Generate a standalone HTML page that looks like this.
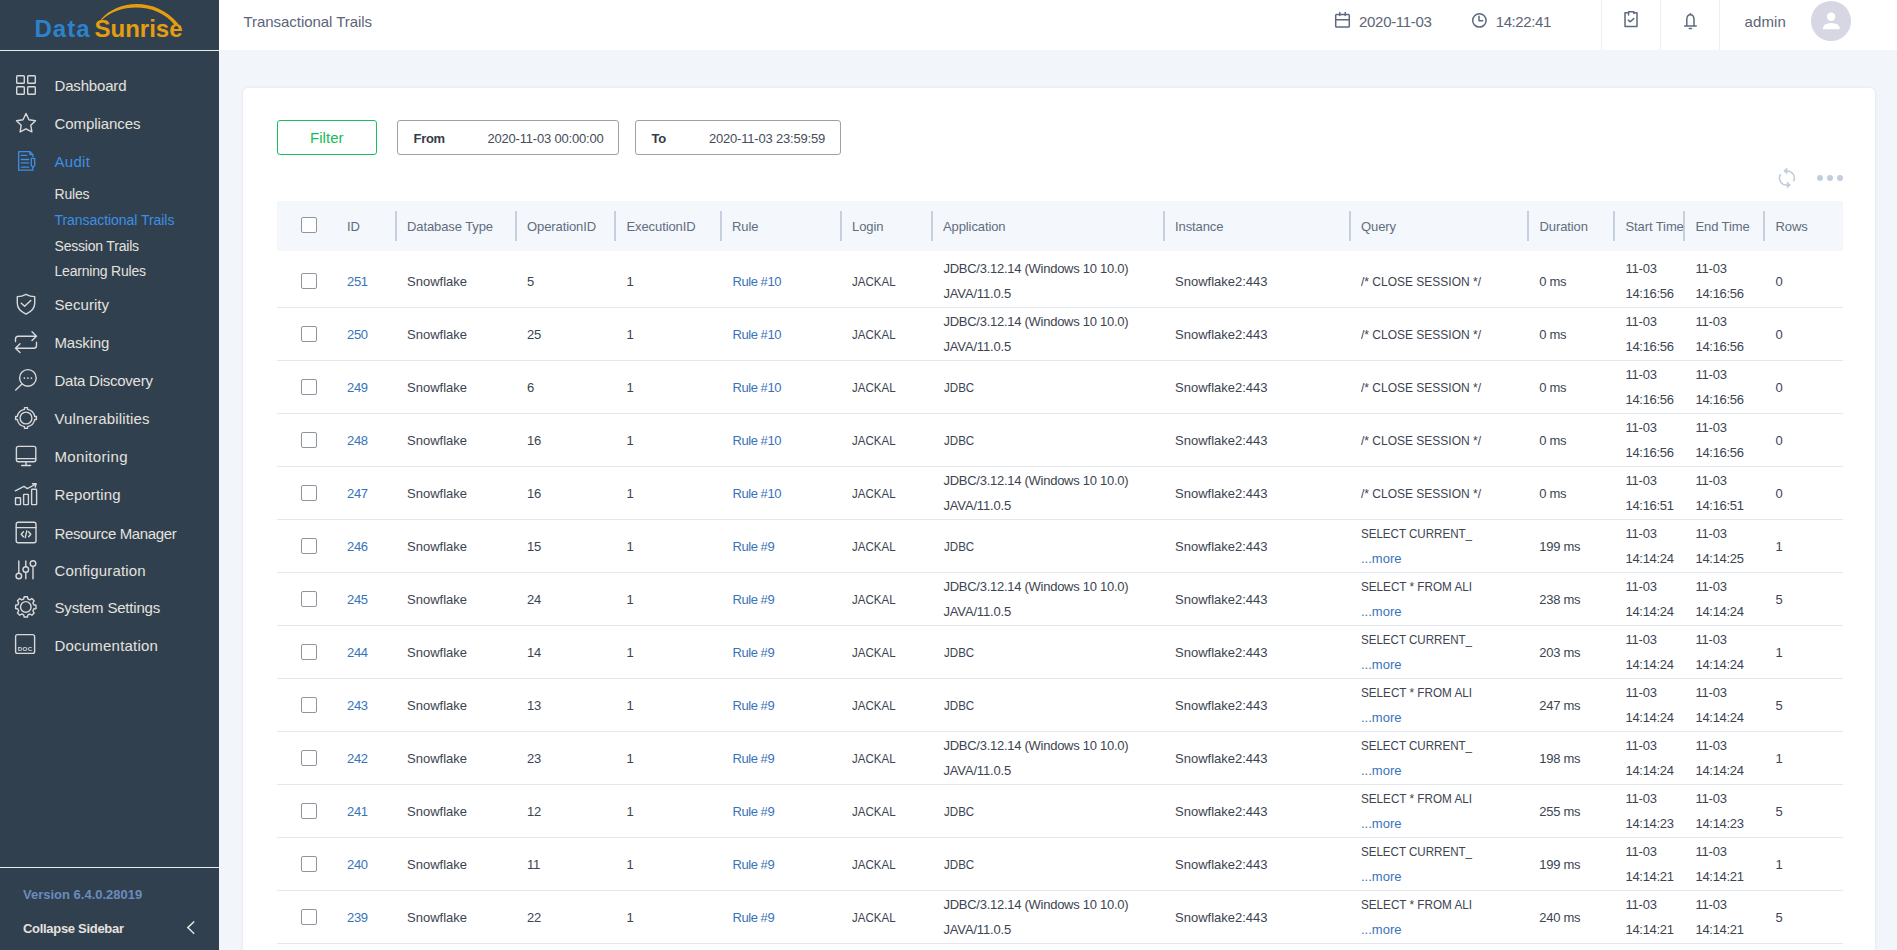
<!DOCTYPE html>
<html><head><meta charset="utf-8">
<style>
*{margin:0;padding:0;box-sizing:border-box}
html,body{width:1897px;height:950px;overflow:hidden;background:#f2f5f9;font-family:'Liberation Sans', sans-serif}
.abs{position:absolute}
.t{position:absolute;height:20px;line-height:20px;white-space:nowrap;font-family:'Liberation Sans', sans-serif}
#sb{position:absolute;left:0;top:0;width:219px;height:950px;background:#30404f}
#hd{position:absolute;left:219px;top:0;width:1678px;height:50px;background:#fff}
.line{position:absolute;left:0;width:219px;height:1px;background:#e9ecef}
#card{position:absolute;left:243px;top:88px;width:1632px;height:900px;background:#fff;border-radius:5px;box-shadow:0 0 3px rgba(40,50,80,0.10)}
.btn{position:absolute;left:277px;top:120px;width:100px;height:35px;border:1.5px solid #16c15d;border-radius:3px}
.inp{position:absolute;top:120px;height:35px;border:1px solid #9ba2ac;border-radius:3px}
#th{position:absolute;left:277px;top:201px;width:1566px;height:50px;background:#f4f7fb}
.sep{position:absolute;top:211px;width:2px;height:30px;background:#c6d0dd}
.rb{position:absolute;left:277px;width:1566px;height:1px;background:#e3e8ee}
.cb{position:absolute;left:301px;width:16px;height:16px;border:1.5px solid #8e959f;border-radius:2px;background:#fff}
</style></head><body>
<div id="sb"></div>
<div class="line" style="top:50px"></div>
<div class="line" style="top:867px"></div>
<div id="hd"></div>
<div id="card"></div>
<div class="btn"></div>
<div class="inp" style="left:397px;width:222px"></div>
<div class="inp" style="left:635px;width:206px"></div>
<div id="th"></div>
<div class="sep" style="left:395px"></div><div class="sep" style="left:515px"></div><div class="sep" style="left:614px"></div><div class="sep" style="left:720px"></div><div class="sep" style="left:840px"></div><div class="sep" style="left:931px"></div><div class="sep" style="left:1163px"></div><div class="sep" style="left:1349px"></div><div class="sep" style="left:1527px"></div><div class="sep" style="left:1613px"></div><div class="sep" style="left:1683px"></div><div class="sep" style="left:1763px"></div>
<div class="cb" style="top:217px"></div>
<div class="rb" style="top:307px"></div><div class="cb" style="top:273px"></div><div class="rb" style="top:360px"></div><div class="cb" style="top:326px"></div><div class="rb" style="top:413px"></div><div class="cb" style="top:379px"></div><div class="rb" style="top:466px"></div><div class="cb" style="top:432px"></div><div class="rb" style="top:519px"></div><div class="cb" style="top:485px"></div><div class="rb" style="top:572px"></div><div class="cb" style="top:538px"></div><div class="rb" style="top:625px"></div><div class="cb" style="top:591px"></div><div class="rb" style="top:678px"></div><div class="cb" style="top:644px"></div><div class="rb" style="top:731px"></div><div class="cb" style="top:697px"></div><div class="rb" style="top:784px"></div><div class="cb" style="top:750px"></div><div class="rb" style="top:837px"></div><div class="cb" style="top:803px"></div><div class="rb" style="top:890px"></div><div class="cb" style="top:856px"></div><div class="rb" style="top:943px"></div><div class="cb" style="top:909px"></div>

<svg class="abs" style="left:0;top:0" width="219" height="50" viewBox="0 0 219 50">
 <path d="M100.8 19.4 C118 -0.5 156 -3 178 23.6 Q177.4 25.6 175 25.4 C156 1.5 119 3.7 101.8 20.1 Q101 20.3 100.8 19.4 Z" fill="#e59d10"/>
</svg>

<div class="t" style="left:34.5px;top:13.3px;height:32px;line-height:32px;font-size:24px;font-weight:bold;color:#2d82cc;letter-spacing:1px">Data</div>
<div class="t" style="left:94.5px;top:13.3px;height:32px;line-height:32px;font-size:24px;font-weight:bold;color:#e59d10;letter-spacing:0px">Sunrise</div>

<svg class="abs" style="left:0;top:0" width="219" height="700" viewBox="0 0 219 700">
 <g fill="none" stroke="#d9d9d9" stroke-width="1.4" stroke-linecap="round" stroke-linejoin="round">
  <!-- dashboard -->
  <rect x="16.7" y="75.7" width="7.6" height="7.6" rx="0.8"/>
  <rect x="27.7" y="75.7" width="7.6" height="7.6" rx="0.8"/>
  <rect x="16.7" y="86.7" width="7.6" height="7.6" rx="0.8"/>
  <rect x="27.7" y="86.7" width="7.6" height="7.6" rx="0.8"/>
  <!-- star -->
  <path d="M26 113.5 L29 119.8 L35.5 120.7 L30.8 125.3 L31.9 131.9 L26 128.8 L20.1 131.9 L21.2 125.3 L16.5 120.7 L23 119.8 Z"/>
  <!-- shield -->
  <path d="M26 294.3 C23 296 20 296.6 17.3 296.6 L17.3 303.5 C17.3 308.5 21 311.8 26 314.2 C31 311.8 34.7 308.5 34.7 303.5 L34.7 296.6 C32 296.6 29 296 26 294.3 Z"/>
  <path d="M21.3 303.3 L24.6 306.2 L30.8 300.5"/>
  <!-- masking -->
  <path d="M15.5 341.5 L15.5 339 Q15.5 336.2 18.3 336.2 L36.5 336.2 M32 331.8 L36.5 336.2 L32 340.6"/>
  <path d="M36.5 342.3 L36.5 345.4 Q36.5 348.2 33.7 348.2 L15.5 348.2 M20 343.8 L15.5 348.2 L20 352.6"/>
  <!-- discovery -->
  <circle cx="27.9" cy="377.9" r="8.3"/>
  <path d="M21.8 384.2 L15.7 390"/>
  <!-- vulnerabilities -->
  <path d="M27.5 409.33 A8.8 8.8 0 0 1 34.67 416.5 L36.4 416.5 L36.4 419.5 L34.67 419.5 A8.8 8.8 0 0 1 27.5 426.67 L27.5 428.4 L24.5 428.4 L24.5 426.67 A8.8 8.8 0 0 1 17.33 419.5 L15.6 419.5 L15.6 416.5 L17.33 416.5 A8.8 8.8 0 0 1 24.5 409.33 L24.5 407.6 L27.5 407.6 Z"/>
  <circle cx="26" cy="418" r="5.9"/>
  <!-- monitor -->
  <rect x="16.4" y="446.4" width="19.4" height="15.3" rx="2"/>
  <path d="M16.4 458.6 L35.8 458.6 M26 461.7 L26 465.3 M21.6 465.5 L30.6 465.5"/>
  <!-- reporting -->
  <rect x="15.5" y="497.8" width="5" height="6.8" rx="0.5"/>
  <rect x="23.6" y="494.4" width="4.8" height="10.2" rx="0.5"/>
  <rect x="31.6" y="489.3" width="5" height="15.3" rx="0.5"/>
  <path d="M15.3 490.8 L24 486.4 L27.3 488.6 L36 484 M32.5 483.8 L36.2 483.8 L35.2 487"/>
  <!-- resource manager -->
  <rect x="16.2" y="522.3" width="19.8" height="20.4" rx="2"/>
  <path d="M16.2 527.6 L36 527.6 M23.4 531.8 L21.2 534.3 L23.4 536.8 M28.6 531.8 L30.8 534.3 L28.6 536.8 M26.8 531 L25.2 537.6"/>
  <!-- configuration -->
  <path d="M18.8 561 L18.8 573 M25.8 561 L25.8 566.5 M25.8 572.5 L25.8 578.7 M33 566.6 L33 578.7"/>
  <circle cx="18.8" cy="576" r="2.8"/>
  <circle cx="25.8" cy="569.5" r="2.8"/>
  <circle cx="33" cy="563.6" r="2.8"/>
  <!-- gear -->
  <circle cx="25.8" cy="606.9" r="5.3"/>
  <!-- doc -->
  <rect x="15.6" y="634.6" width="19" height="18.8" rx="2"/>
 </g>
 <!-- audit (blue) -->
 <g fill="none" stroke="#3f8fe3" stroke-width="1.3" stroke-linejoin="round" stroke-linecap="round">
  <path d="M32.9 156.6 L32.9 154.8 L29.9 151.7 L18.7 151.7 L18.7 170.2 L32.9 170.2 L32.9 168"/>
  <path d="M29.9 151.9 L29.9 154.5 L32.6 154.5"/>
  <path d="M21.3 155.4 L26.9 155.4 M21.3 159.5 L28.7 159.5 M21.3 162.9 L28.7 162.9 M21.3 167.2 L28.7 167.2"/>
  <path d="M31.3 158.4 L34.7 158.4 L34.7 165.6 L33 167.4 L31.3 165.6 Z"/>
 </g>
 <!-- vuln nubs -->
 <g fill="#d9d9d9">
  <circle cx="24.4" cy="378.1" r="0.9"/><circle cx="27.9" cy="378.1" r="0.9"/><circle cx="31.4" cy="378.1" r="0.9"/>
 </g>
 <!-- gear teeth -->
 <path fill="none" stroke="#d9d9d9" stroke-width="1.4" stroke-linejoin="round" d="M23.68 598.98 L24.19 596.73 L27.41 596.73 L27.92 598.98 L29.90 599.80 L31.85 598.57 L34.13 600.85 L32.90 602.80 L33.72 604.78 L35.97 605.29 L35.97 608.51 L33.72 609.02 L32.90 611.00 L34.13 612.95 L31.85 615.23 L29.90 614.00 L27.92 614.82 L27.41 617.07 L24.19 617.07 L23.68 614.82 L21.70 614.00 L19.75 615.23 L17.47 612.95 L18.70 611.00 L17.88 609.02 L15.63 608.51 L15.63 605.29 L17.88 604.78 L18.70 602.80 L17.47 600.85 L19.75 598.57 L21.70 599.80 Z"/>
 <text x="25.1" y="651.4" font-family="Liberation Sans" font-weight="bold" font-size="6.2" fill="#d9d9d9" text-anchor="middle" letter-spacing="0.3">DOC</text>
</svg>


<svg class="abs" style="left:1300px;top:0" width="597" height="50" viewBox="1300 0 597 50">
 <g fill="none" stroke="#5d6a7e" stroke-width="1.5" stroke-linejoin="round" stroke-linecap="round">
  <rect x="1335.7" y="14.4" width="13.6" height="12.7" rx="0.8"/>
  <path d="M1335.7 19.8 L1349.3 19.8 M1339.8 12.6 L1339.8 15.5 M1345.2 12.6 L1345.2 15.5"/>
  <circle cx="1479.4" cy="20.4" r="6.7"/>
  <path d="M1479 16.2 L1479 20.8 L1482.7 20.8"/>
  <path d="M1627.5 12.8 L1625 12.8 L1625 26.6 L1637 26.6 L1637 12.8 L1634 12.8"/>
  <path d="M1628.6 15 L1628.6 11.8 L1633.8 11.8 L1633.8 13.5"/>
  <path d="M1628.3 20.2 L1630.3 21.8 L1633.7 18.6"/>
  <path d="M1686.8 25.6 L1686.8 19.6 Q1686.8 14.7 1690.4 14.7 Q1694 14.7 1694 19.6 L1694 25.6 M1684.6 26 L1696.2 26"/>
  <path d="M1689.3 28.4 L1691.5 28.4"/>
 </g>
 <circle cx="1690.4" cy="13.9" r="0.9" fill="#5d6a7e"/>
 <g stroke="#ebeef2" stroke-width="1">
  <path d="M1601.5 0 L1601.5 50 M1660.5 0 L1660.5 50 M1719.5 0 L1719.5 50"/>
 </g>
 <circle cx="1831" cy="21" r="20" fill="#d6d7e2"/>
 <circle cx="1831.1" cy="16.8" r="4.2" fill="#fff"/>
 <path d="M1822.8 29.2 Q1822.8 23 1831.3 23 Q1839.9 23 1839.9 29.2 Z" fill="#fff"/>
</svg>


<svg class="abs" style="left:1770px;top:160px" width="80" height="40" viewBox="1770 160 80 40">
 <g fill="none" stroke="#c3cedc" stroke-width="1.6">
  <path d="M1786.5 171 A7 7 0 0 1 1793.4 181.4"/>
  <path d="M1780.6 174.3 A7 7 0 0 0 1787.5 185"/>
 </g>
 <g fill="#c3cedc">
  <path d="M1783.3 170.9 L1787.3 167.2 L1787.3 174.6 Z"/>
  <path d="M1790.9 185 L1786.9 181.3 L1786.9 188.7 Z"/>
  <circle cx="1820" cy="178" r="3"/><circle cx="1830" cy="178" r="3"/><circle cx="1840" cy="178" r="3"/>
 </g>
</svg>

<svg class="abs" style="left:180px;top:915px" width="20" height="25" viewBox="180 915 20 25"><path d="M194.2 921.5 L187.8 927.6 L194.2 933.7" fill="none" stroke="#e4e2de" stroke-width="1.5"/></svg>
<div class="t" style="left:54.5px;top:75.80px;font-size:15px;color:#e4e2de;font-weight:normal;letter-spacing:-0.175px;">Dashboard</div><div class="t" style="left:54.5px;top:113.80px;font-size:15px;color:#e4e2de;font-weight:normal;letter-spacing:-0.07px;">Compliances</div><div class="t" style="left:54.5px;top:151.80px;font-size:15px;color:#3f8fe3;font-weight:normal;letter-spacing:0.3px;">Audit</div><div class="t" style="left:54.5px;top:294.60px;font-size:15px;color:#e4e2de;font-weight:normal;letter-spacing:0.057px;">Security</div><div class="t" style="left:54.5px;top:332.90px;font-size:15px;color:#e4e2de;font-weight:normal;letter-spacing:-0.167px;">Masking</div><div class="t" style="left:54.5px;top:370.80px;font-size:15px;color:#e4e2de;font-weight:normal;letter-spacing:-0.254px;">Data Discovery</div><div class="t" style="left:54.5px;top:408.70px;font-size:15px;color:#e4e2de;font-weight:normal;letter-spacing:0.157px;">Vulnerabilities</div><div class="t" style="left:54.5px;top:446.60px;font-size:15px;color:#e4e2de;font-weight:normal;letter-spacing:0.333px;">Monitoring</div><div class="t" style="left:54.5px;top:484.50px;font-size:15px;color:#e4e2de;font-weight:normal;letter-spacing:0.125px;">Reporting</div><div class="t" style="left:54.5px;top:523.50px;font-size:15px;color:#e4e2de;font-weight:normal;letter-spacing:-0.353px;">Resource Manager</div><div class="t" style="left:54.5px;top:560.80px;font-size:15px;color:#e4e2de;font-weight:normal;letter-spacing:0.15px;">Configuration</div><div class="t" style="left:54.5px;top:597.60px;font-size:15px;color:#e4e2de;font-weight:normal;letter-spacing:-0.186px;">System Settings</div><div class="t" style="left:54.5px;top:635.70px;font-size:15px;color:#e4e2de;font-weight:normal;letter-spacing:0.208px;">Documentation</div><div class="t" style="left:54.5px;top:183.95px;font-size:14px;color:#e4e2de;font-weight:normal;letter-spacing:-0.2px;">Rules</div><div class="t" style="left:54.5px;top:209.75px;font-size:14px;color:#3f8fe3;font-weight:normal;letter-spacing:-0.05px;">Transactional Trails</div><div class="t" style="left:54.5px;top:235.55px;font-size:14px;color:#e4e2de;font-weight:normal;letter-spacing:-0.2px;">Session Trails</div><div class="t" style="left:54.5px;top:261.35px;font-size:14px;color:#e4e2de;font-weight:normal;letter-spacing:-0.2px;">Learning Rules</div><div class="t" style="left:23px;top:885.10px;font-size:13px;color:#6a8cbd;font-weight:bold;letter-spacing:0px;">Version 6.4.0.28019</div><div class="t" style="left:23px;top:919.10px;font-size:13px;color:#e4e2de;font-weight:bold;letter-spacing:-0.3px;">Collapse Sidebar</div><div class="t" style="left:243.5px;top:11.50px;font-size:15px;color:#5b6577;font-weight:normal;letter-spacing:-0.05px;">Transactional Trails</div><div class="t" style="left:1359px;top:11.80px;font-size:15px;color:#5b6577;font-weight:normal;letter-spacing:-0.3px;">2020-11-03</div><div class="t" style="left:1495.7px;top:11.80px;font-size:15px;color:#5b6577;font-weight:normal;letter-spacing:-0.4px;">14:22:41</div><div class="t" style="left:1744.5px;top:11.70px;font-size:15px;color:#5b6577;font-weight:normal;letter-spacing:0.1px;">admin</div><div class="t" style="left:310px;top:128.00px;font-size:15px;color:#16bb5a;font-weight:normal;letter-spacing:0.05px;">Filter</div><div class="t" style="left:413.5px;top:128.70px;font-size:13px;color:#363c47;font-weight:bold;letter-spacing:-0.3px;">From</div><div class="t" style="left:487.5px;top:128.70px;font-size:13px;color:#454c58;font-weight:normal;letter-spacing:-0.2px;">2020-11-03 00:00:00</div><div class="t" style="left:651.5px;top:128.70px;font-size:13px;color:#363c47;font-weight:bold;letter-spacing:-0.3px;">To</div><div class="t" style="left:709px;top:128.70px;font-size:13px;color:#454c58;font-weight:normal;letter-spacing:-0.2px;">2020-11-03 23:59:59</div><div class="t" style="left:347px;top:216.50px;font-size:13px;color:#616d80;font-weight:normal;letter-spacing:-0.1px;">ID</div><div class="t" style="left:407px;top:216.50px;font-size:13px;color:#616d80;font-weight:normal;letter-spacing:-0.1px;">Database Type</div><div class="t" style="left:527px;top:216.50px;font-size:13px;color:#616d80;font-weight:normal;letter-spacing:-0.1px;">OperationID</div><div class="t" style="left:626.5px;top:216.50px;font-size:13px;color:#616d80;font-weight:normal;letter-spacing:-0.1px;">ExecutionID</div><div class="t" style="left:732px;top:216.50px;font-size:13px;color:#616d80;font-weight:normal;letter-spacing:-0.1px;">Rule</div><div class="t" style="left:852px;top:216.50px;font-size:13px;color:#616d80;font-weight:normal;letter-spacing:-0.1px;">Login</div><div class="t" style="left:943px;top:216.50px;font-size:13px;color:#616d80;font-weight:normal;letter-spacing:-0.1px;">Application</div><div class="t" style="left:1175px;top:216.50px;font-size:13px;color:#616d80;font-weight:normal;letter-spacing:-0.1px;">Instance</div><div class="t" style="left:1361px;top:216.50px;font-size:13px;color:#616d80;font-weight:normal;letter-spacing:-0.1px;">Query</div><div class="t" style="left:1539.5px;top:216.50px;font-size:13px;color:#616d80;font-weight:normal;letter-spacing:-0.1px;">Duration</div><div class="t" style="left:1625.5px;top:216.50px;font-size:13px;color:#616d80;font-weight:normal;letter-spacing:-0.1px;width:58px;overflow:hidden;">Start Time</div><div class="t" style="left:1695.5px;top:216.50px;font-size:13px;color:#616d80;font-weight:normal;letter-spacing:-0.1px;">End Time</div><div class="t" style="left:1775.5px;top:216.50px;font-size:13px;color:#616d80;font-weight:normal;letter-spacing:-0.1px;">Rows</div><div class="t" style="left:347px;top:271.50px;font-size:13px;color:#3873b9;font-weight:normal;letter-spacing:-0.3px;">251</div><div class="t" style="left:407px;top:271.50px;font-size:13px;color:#3c4451;font-weight:normal;letter-spacing:0px;">Snowflake</div><div class="t" style="left:527px;top:271.50px;font-size:13px;color:#3c4451;font-weight:normal;letter-spacing:-0.3px;">5</div><div class="t" style="left:626.5px;top:271.50px;font-size:13px;color:#3c4451;font-weight:normal;letter-spacing:0px;">1</div><div class="t" style="left:732.5px;top:271.50px;font-size:13px;color:#3873b9;font-weight:normal;letter-spacing:-0.45px;">Rule #10</div><div class="t" style="left:852.3px;top:271.50px;font-size:13px;color:#3c4451;font-weight:normal;letter-spacing:0px;transform:scaleX(0.888);transform-origin:0 0;">JACKAL</div><div class="t" style="left:943.5px;top:258.50px;font-size:13px;color:#3c4451;font-weight:normal;letter-spacing:-0.27px;">JDBC/3.12.14 (Windows 10 10.0)</div><div class="t" style="left:943.5px;top:284.00px;font-size:13px;color:#3c4451;font-weight:normal;letter-spacing:-0.17px;">JAVA/11.0.5</div><div class="t" style="left:1175px;top:271.50px;font-size:13px;color:#3c4451;font-weight:normal;letter-spacing:0px;">Snowflake2:443</div><div class="t" style="left:1361px;top:271.50px;font-size:13px;color:#3c4451;font-weight:normal;letter-spacing:0px;transform:scaleX(0.923);transform-origin:0 0;">/* CLOSE SESSION */</div><div class="t" style="left:1539.3px;top:271.50px;font-size:13px;color:#3c4451;font-weight:normal;letter-spacing:-0.3px;">0 ms</div><div class="t" style="left:1625.5px;top:258.50px;font-size:13px;color:#3c4451;font-weight:normal;letter-spacing:-0.2px;">11-03</div><div class="t" style="left:1625.5px;top:284.00px;font-size:13px;color:#3c4451;font-weight:normal;letter-spacing:-0.3px;">14:16:56</div><div class="t" style="left:1695.5px;top:258.50px;font-size:13px;color:#3c4451;font-weight:normal;letter-spacing:-0.2px;">11-03</div><div class="t" style="left:1695.5px;top:284.00px;font-size:13px;color:#3c4451;font-weight:normal;letter-spacing:-0.3px;">14:16:56</div><div class="t" style="left:1775.5px;top:271.50px;font-size:13px;color:#3c4451;font-weight:normal;letter-spacing:0px;">0</div><div class="t" style="left:347px;top:324.50px;font-size:13px;color:#3873b9;font-weight:normal;letter-spacing:-0.3px;">250</div><div class="t" style="left:407px;top:324.50px;font-size:13px;color:#3c4451;font-weight:normal;letter-spacing:0px;">Snowflake</div><div class="t" style="left:527px;top:324.50px;font-size:13px;color:#3c4451;font-weight:normal;letter-spacing:-0.3px;">25</div><div class="t" style="left:626.5px;top:324.50px;font-size:13px;color:#3c4451;font-weight:normal;letter-spacing:0px;">1</div><div class="t" style="left:732.5px;top:324.50px;font-size:13px;color:#3873b9;font-weight:normal;letter-spacing:-0.45px;">Rule #10</div><div class="t" style="left:852.3px;top:324.50px;font-size:13px;color:#3c4451;font-weight:normal;letter-spacing:0px;transform:scaleX(0.888);transform-origin:0 0;">JACKAL</div><div class="t" style="left:943.5px;top:311.50px;font-size:13px;color:#3c4451;font-weight:normal;letter-spacing:-0.27px;">JDBC/3.12.14 (Windows 10 10.0)</div><div class="t" style="left:943.5px;top:337.00px;font-size:13px;color:#3c4451;font-weight:normal;letter-spacing:-0.17px;">JAVA/11.0.5</div><div class="t" style="left:1175px;top:324.50px;font-size:13px;color:#3c4451;font-weight:normal;letter-spacing:0px;">Snowflake2:443</div><div class="t" style="left:1361px;top:324.50px;font-size:13px;color:#3c4451;font-weight:normal;letter-spacing:0px;transform:scaleX(0.923);transform-origin:0 0;">/* CLOSE SESSION */</div><div class="t" style="left:1539.3px;top:324.50px;font-size:13px;color:#3c4451;font-weight:normal;letter-spacing:-0.3px;">0 ms</div><div class="t" style="left:1625.5px;top:311.50px;font-size:13px;color:#3c4451;font-weight:normal;letter-spacing:-0.2px;">11-03</div><div class="t" style="left:1625.5px;top:337.00px;font-size:13px;color:#3c4451;font-weight:normal;letter-spacing:-0.3px;">14:16:56</div><div class="t" style="left:1695.5px;top:311.50px;font-size:13px;color:#3c4451;font-weight:normal;letter-spacing:-0.2px;">11-03</div><div class="t" style="left:1695.5px;top:337.00px;font-size:13px;color:#3c4451;font-weight:normal;letter-spacing:-0.3px;">14:16:56</div><div class="t" style="left:1775.5px;top:324.50px;font-size:13px;color:#3c4451;font-weight:normal;letter-spacing:0px;">0</div><div class="t" style="left:347px;top:377.50px;font-size:13px;color:#3873b9;font-weight:normal;letter-spacing:-0.3px;">249</div><div class="t" style="left:407px;top:377.50px;font-size:13px;color:#3c4451;font-weight:normal;letter-spacing:0px;">Snowflake</div><div class="t" style="left:527px;top:377.50px;font-size:13px;color:#3c4451;font-weight:normal;letter-spacing:-0.3px;">6</div><div class="t" style="left:626.5px;top:377.50px;font-size:13px;color:#3c4451;font-weight:normal;letter-spacing:0px;">1</div><div class="t" style="left:732.5px;top:377.50px;font-size:13px;color:#3873b9;font-weight:normal;letter-spacing:-0.45px;">Rule #10</div><div class="t" style="left:852.3px;top:377.50px;font-size:13px;color:#3c4451;font-weight:normal;letter-spacing:0px;transform:scaleX(0.888);transform-origin:0 0;">JACKAL</div><div class="t" style="left:943.5px;top:377.50px;font-size:13px;color:#3c4451;font-weight:normal;letter-spacing:0px;transform:scaleX(0.89);transform-origin:0 0;">JDBC</div><div class="t" style="left:1175px;top:377.50px;font-size:13px;color:#3c4451;font-weight:normal;letter-spacing:0px;">Snowflake2:443</div><div class="t" style="left:1361px;top:377.50px;font-size:13px;color:#3c4451;font-weight:normal;letter-spacing:0px;transform:scaleX(0.923);transform-origin:0 0;">/* CLOSE SESSION */</div><div class="t" style="left:1539.3px;top:377.50px;font-size:13px;color:#3c4451;font-weight:normal;letter-spacing:-0.3px;">0 ms</div><div class="t" style="left:1625.5px;top:364.50px;font-size:13px;color:#3c4451;font-weight:normal;letter-spacing:-0.2px;">11-03</div><div class="t" style="left:1625.5px;top:390.00px;font-size:13px;color:#3c4451;font-weight:normal;letter-spacing:-0.3px;">14:16:56</div><div class="t" style="left:1695.5px;top:364.50px;font-size:13px;color:#3c4451;font-weight:normal;letter-spacing:-0.2px;">11-03</div><div class="t" style="left:1695.5px;top:390.00px;font-size:13px;color:#3c4451;font-weight:normal;letter-spacing:-0.3px;">14:16:56</div><div class="t" style="left:1775.5px;top:377.50px;font-size:13px;color:#3c4451;font-weight:normal;letter-spacing:0px;">0</div><div class="t" style="left:347px;top:430.50px;font-size:13px;color:#3873b9;font-weight:normal;letter-spacing:-0.3px;">248</div><div class="t" style="left:407px;top:430.50px;font-size:13px;color:#3c4451;font-weight:normal;letter-spacing:0px;">Snowflake</div><div class="t" style="left:527px;top:430.50px;font-size:13px;color:#3c4451;font-weight:normal;letter-spacing:-0.3px;">16</div><div class="t" style="left:626.5px;top:430.50px;font-size:13px;color:#3c4451;font-weight:normal;letter-spacing:0px;">1</div><div class="t" style="left:732.5px;top:430.50px;font-size:13px;color:#3873b9;font-weight:normal;letter-spacing:-0.45px;">Rule #10</div><div class="t" style="left:852.3px;top:430.50px;font-size:13px;color:#3c4451;font-weight:normal;letter-spacing:0px;transform:scaleX(0.888);transform-origin:0 0;">JACKAL</div><div class="t" style="left:943.5px;top:430.50px;font-size:13px;color:#3c4451;font-weight:normal;letter-spacing:0px;transform:scaleX(0.89);transform-origin:0 0;">JDBC</div><div class="t" style="left:1175px;top:430.50px;font-size:13px;color:#3c4451;font-weight:normal;letter-spacing:0px;">Snowflake2:443</div><div class="t" style="left:1361px;top:430.50px;font-size:13px;color:#3c4451;font-weight:normal;letter-spacing:0px;transform:scaleX(0.923);transform-origin:0 0;">/* CLOSE SESSION */</div><div class="t" style="left:1539.3px;top:430.50px;font-size:13px;color:#3c4451;font-weight:normal;letter-spacing:-0.3px;">0 ms</div><div class="t" style="left:1625.5px;top:417.50px;font-size:13px;color:#3c4451;font-weight:normal;letter-spacing:-0.2px;">11-03</div><div class="t" style="left:1625.5px;top:443.00px;font-size:13px;color:#3c4451;font-weight:normal;letter-spacing:-0.3px;">14:16:56</div><div class="t" style="left:1695.5px;top:417.50px;font-size:13px;color:#3c4451;font-weight:normal;letter-spacing:-0.2px;">11-03</div><div class="t" style="left:1695.5px;top:443.00px;font-size:13px;color:#3c4451;font-weight:normal;letter-spacing:-0.3px;">14:16:56</div><div class="t" style="left:1775.5px;top:430.50px;font-size:13px;color:#3c4451;font-weight:normal;letter-spacing:0px;">0</div><div class="t" style="left:347px;top:483.50px;font-size:13px;color:#3873b9;font-weight:normal;letter-spacing:-0.3px;">247</div><div class="t" style="left:407px;top:483.50px;font-size:13px;color:#3c4451;font-weight:normal;letter-spacing:0px;">Snowflake</div><div class="t" style="left:527px;top:483.50px;font-size:13px;color:#3c4451;font-weight:normal;letter-spacing:-0.3px;">16</div><div class="t" style="left:626.5px;top:483.50px;font-size:13px;color:#3c4451;font-weight:normal;letter-spacing:0px;">1</div><div class="t" style="left:732.5px;top:483.50px;font-size:13px;color:#3873b9;font-weight:normal;letter-spacing:-0.45px;">Rule #10</div><div class="t" style="left:852.3px;top:483.50px;font-size:13px;color:#3c4451;font-weight:normal;letter-spacing:0px;transform:scaleX(0.888);transform-origin:0 0;">JACKAL</div><div class="t" style="left:943.5px;top:470.50px;font-size:13px;color:#3c4451;font-weight:normal;letter-spacing:-0.27px;">JDBC/3.12.14 (Windows 10 10.0)</div><div class="t" style="left:943.5px;top:496.00px;font-size:13px;color:#3c4451;font-weight:normal;letter-spacing:-0.17px;">JAVA/11.0.5</div><div class="t" style="left:1175px;top:483.50px;font-size:13px;color:#3c4451;font-weight:normal;letter-spacing:0px;">Snowflake2:443</div><div class="t" style="left:1361px;top:483.50px;font-size:13px;color:#3c4451;font-weight:normal;letter-spacing:0px;transform:scaleX(0.923);transform-origin:0 0;">/* CLOSE SESSION */</div><div class="t" style="left:1539.3px;top:483.50px;font-size:13px;color:#3c4451;font-weight:normal;letter-spacing:-0.3px;">0 ms</div><div class="t" style="left:1625.5px;top:470.50px;font-size:13px;color:#3c4451;font-weight:normal;letter-spacing:-0.2px;">11-03</div><div class="t" style="left:1625.5px;top:496.00px;font-size:13px;color:#3c4451;font-weight:normal;letter-spacing:-0.3px;">14:16:51</div><div class="t" style="left:1695.5px;top:470.50px;font-size:13px;color:#3c4451;font-weight:normal;letter-spacing:-0.2px;">11-03</div><div class="t" style="left:1695.5px;top:496.00px;font-size:13px;color:#3c4451;font-weight:normal;letter-spacing:-0.3px;">14:16:51</div><div class="t" style="left:1775.5px;top:483.50px;font-size:13px;color:#3c4451;font-weight:normal;letter-spacing:0px;">0</div><div class="t" style="left:347px;top:536.50px;font-size:13px;color:#3873b9;font-weight:normal;letter-spacing:-0.3px;">246</div><div class="t" style="left:407px;top:536.50px;font-size:13px;color:#3c4451;font-weight:normal;letter-spacing:0px;">Snowflake</div><div class="t" style="left:527px;top:536.50px;font-size:13px;color:#3c4451;font-weight:normal;letter-spacing:-0.3px;">15</div><div class="t" style="left:626.5px;top:536.50px;font-size:13px;color:#3c4451;font-weight:normal;letter-spacing:0px;">1</div><div class="t" style="left:732.5px;top:536.50px;font-size:13px;color:#3873b9;font-weight:normal;letter-spacing:-0.45px;">Rule #9</div><div class="t" style="left:852.3px;top:536.50px;font-size:13px;color:#3c4451;font-weight:normal;letter-spacing:0px;transform:scaleX(0.888);transform-origin:0 0;">JACKAL</div><div class="t" style="left:943.5px;top:536.50px;font-size:13px;color:#3c4451;font-weight:normal;letter-spacing:0px;transform:scaleX(0.89);transform-origin:0 0;">JDBC</div><div class="t" style="left:1175px;top:536.50px;font-size:13px;color:#3c4451;font-weight:normal;letter-spacing:0px;">Snowflake2:443</div><div class="t" style="left:1361px;top:523.50px;font-size:13px;color:#3c4451;font-weight:normal;letter-spacing:0px;transform:scaleX(0.89);transform-origin:0 0;">SELECT CURRENT_</div><div class="t" style="left:1361px;top:549.00px;font-size:13px;color:#3873b9;font-weight:normal;letter-spacing:0px;">...more</div><div class="t" style="left:1539.3px;top:536.50px;font-size:13px;color:#3c4451;font-weight:normal;letter-spacing:-0.3px;">199 ms</div><div class="t" style="left:1625.5px;top:523.50px;font-size:13px;color:#3c4451;font-weight:normal;letter-spacing:-0.2px;">11-03</div><div class="t" style="left:1625.5px;top:549.00px;font-size:13px;color:#3c4451;font-weight:normal;letter-spacing:-0.3px;">14:14:24</div><div class="t" style="left:1695.5px;top:523.50px;font-size:13px;color:#3c4451;font-weight:normal;letter-spacing:-0.2px;">11-03</div><div class="t" style="left:1695.5px;top:549.00px;font-size:13px;color:#3c4451;font-weight:normal;letter-spacing:-0.3px;">14:14:25</div><div class="t" style="left:1775.5px;top:536.50px;font-size:13px;color:#3c4451;font-weight:normal;letter-spacing:0px;">1</div><div class="t" style="left:347px;top:589.50px;font-size:13px;color:#3873b9;font-weight:normal;letter-spacing:-0.3px;">245</div><div class="t" style="left:407px;top:589.50px;font-size:13px;color:#3c4451;font-weight:normal;letter-spacing:0px;">Snowflake</div><div class="t" style="left:527px;top:589.50px;font-size:13px;color:#3c4451;font-weight:normal;letter-spacing:-0.3px;">24</div><div class="t" style="left:626.5px;top:589.50px;font-size:13px;color:#3c4451;font-weight:normal;letter-spacing:0px;">1</div><div class="t" style="left:732.5px;top:589.50px;font-size:13px;color:#3873b9;font-weight:normal;letter-spacing:-0.45px;">Rule #9</div><div class="t" style="left:852.3px;top:589.50px;font-size:13px;color:#3c4451;font-weight:normal;letter-spacing:0px;transform:scaleX(0.888);transform-origin:0 0;">JACKAL</div><div class="t" style="left:943.5px;top:576.50px;font-size:13px;color:#3c4451;font-weight:normal;letter-spacing:-0.27px;">JDBC/3.12.14 (Windows 10 10.0)</div><div class="t" style="left:943.5px;top:602.00px;font-size:13px;color:#3c4451;font-weight:normal;letter-spacing:-0.17px;">JAVA/11.0.5</div><div class="t" style="left:1175px;top:589.50px;font-size:13px;color:#3c4451;font-weight:normal;letter-spacing:0px;">Snowflake2:443</div><div class="t" style="left:1361px;top:576.50px;font-size:13px;color:#3c4451;font-weight:normal;letter-spacing:0px;transform:scaleX(0.9);transform-origin:0 0;">SELECT * FROM ALI</div><div class="t" style="left:1361px;top:602.00px;font-size:13px;color:#3873b9;font-weight:normal;letter-spacing:0px;">...more</div><div class="t" style="left:1539.3px;top:589.50px;font-size:13px;color:#3c4451;font-weight:normal;letter-spacing:-0.3px;">238 ms</div><div class="t" style="left:1625.5px;top:576.50px;font-size:13px;color:#3c4451;font-weight:normal;letter-spacing:-0.2px;">11-03</div><div class="t" style="left:1625.5px;top:602.00px;font-size:13px;color:#3c4451;font-weight:normal;letter-spacing:-0.3px;">14:14:24</div><div class="t" style="left:1695.5px;top:576.50px;font-size:13px;color:#3c4451;font-weight:normal;letter-spacing:-0.2px;">11-03</div><div class="t" style="left:1695.5px;top:602.00px;font-size:13px;color:#3c4451;font-weight:normal;letter-spacing:-0.3px;">14:14:24</div><div class="t" style="left:1775.5px;top:589.50px;font-size:13px;color:#3c4451;font-weight:normal;letter-spacing:0px;">5</div><div class="t" style="left:347px;top:642.50px;font-size:13px;color:#3873b9;font-weight:normal;letter-spacing:-0.3px;">244</div><div class="t" style="left:407px;top:642.50px;font-size:13px;color:#3c4451;font-weight:normal;letter-spacing:0px;">Snowflake</div><div class="t" style="left:527px;top:642.50px;font-size:13px;color:#3c4451;font-weight:normal;letter-spacing:-0.3px;">14</div><div class="t" style="left:626.5px;top:642.50px;font-size:13px;color:#3c4451;font-weight:normal;letter-spacing:0px;">1</div><div class="t" style="left:732.5px;top:642.50px;font-size:13px;color:#3873b9;font-weight:normal;letter-spacing:-0.45px;">Rule #9</div><div class="t" style="left:852.3px;top:642.50px;font-size:13px;color:#3c4451;font-weight:normal;letter-spacing:0px;transform:scaleX(0.888);transform-origin:0 0;">JACKAL</div><div class="t" style="left:943.5px;top:642.50px;font-size:13px;color:#3c4451;font-weight:normal;letter-spacing:0px;transform:scaleX(0.89);transform-origin:0 0;">JDBC</div><div class="t" style="left:1175px;top:642.50px;font-size:13px;color:#3c4451;font-weight:normal;letter-spacing:0px;">Snowflake2:443</div><div class="t" style="left:1361px;top:629.50px;font-size:13px;color:#3c4451;font-weight:normal;letter-spacing:0px;transform:scaleX(0.89);transform-origin:0 0;">SELECT CURRENT_</div><div class="t" style="left:1361px;top:655.00px;font-size:13px;color:#3873b9;font-weight:normal;letter-spacing:0px;">...more</div><div class="t" style="left:1539.3px;top:642.50px;font-size:13px;color:#3c4451;font-weight:normal;letter-spacing:-0.3px;">203 ms</div><div class="t" style="left:1625.5px;top:629.50px;font-size:13px;color:#3c4451;font-weight:normal;letter-spacing:-0.2px;">11-03</div><div class="t" style="left:1625.5px;top:655.00px;font-size:13px;color:#3c4451;font-weight:normal;letter-spacing:-0.3px;">14:14:24</div><div class="t" style="left:1695.5px;top:629.50px;font-size:13px;color:#3c4451;font-weight:normal;letter-spacing:-0.2px;">11-03</div><div class="t" style="left:1695.5px;top:655.00px;font-size:13px;color:#3c4451;font-weight:normal;letter-spacing:-0.3px;">14:14:24</div><div class="t" style="left:1775.5px;top:642.50px;font-size:13px;color:#3c4451;font-weight:normal;letter-spacing:0px;">1</div><div class="t" style="left:347px;top:695.50px;font-size:13px;color:#3873b9;font-weight:normal;letter-spacing:-0.3px;">243</div><div class="t" style="left:407px;top:695.50px;font-size:13px;color:#3c4451;font-weight:normal;letter-spacing:0px;">Snowflake</div><div class="t" style="left:527px;top:695.50px;font-size:13px;color:#3c4451;font-weight:normal;letter-spacing:-0.3px;">13</div><div class="t" style="left:626.5px;top:695.50px;font-size:13px;color:#3c4451;font-weight:normal;letter-spacing:0px;">1</div><div class="t" style="left:732.5px;top:695.50px;font-size:13px;color:#3873b9;font-weight:normal;letter-spacing:-0.45px;">Rule #9</div><div class="t" style="left:852.3px;top:695.50px;font-size:13px;color:#3c4451;font-weight:normal;letter-spacing:0px;transform:scaleX(0.888);transform-origin:0 0;">JACKAL</div><div class="t" style="left:943.5px;top:695.50px;font-size:13px;color:#3c4451;font-weight:normal;letter-spacing:0px;transform:scaleX(0.89);transform-origin:0 0;">JDBC</div><div class="t" style="left:1175px;top:695.50px;font-size:13px;color:#3c4451;font-weight:normal;letter-spacing:0px;">Snowflake2:443</div><div class="t" style="left:1361px;top:682.50px;font-size:13px;color:#3c4451;font-weight:normal;letter-spacing:0px;transform:scaleX(0.9);transform-origin:0 0;">SELECT * FROM ALI</div><div class="t" style="left:1361px;top:708.00px;font-size:13px;color:#3873b9;font-weight:normal;letter-spacing:0px;">...more</div><div class="t" style="left:1539.3px;top:695.50px;font-size:13px;color:#3c4451;font-weight:normal;letter-spacing:-0.3px;">247 ms</div><div class="t" style="left:1625.5px;top:682.50px;font-size:13px;color:#3c4451;font-weight:normal;letter-spacing:-0.2px;">11-03</div><div class="t" style="left:1625.5px;top:708.00px;font-size:13px;color:#3c4451;font-weight:normal;letter-spacing:-0.3px;">14:14:24</div><div class="t" style="left:1695.5px;top:682.50px;font-size:13px;color:#3c4451;font-weight:normal;letter-spacing:-0.2px;">11-03</div><div class="t" style="left:1695.5px;top:708.00px;font-size:13px;color:#3c4451;font-weight:normal;letter-spacing:-0.3px;">14:14:24</div><div class="t" style="left:1775.5px;top:695.50px;font-size:13px;color:#3c4451;font-weight:normal;letter-spacing:0px;">5</div><div class="t" style="left:347px;top:748.50px;font-size:13px;color:#3873b9;font-weight:normal;letter-spacing:-0.3px;">242</div><div class="t" style="left:407px;top:748.50px;font-size:13px;color:#3c4451;font-weight:normal;letter-spacing:0px;">Snowflake</div><div class="t" style="left:527px;top:748.50px;font-size:13px;color:#3c4451;font-weight:normal;letter-spacing:-0.3px;">23</div><div class="t" style="left:626.5px;top:748.50px;font-size:13px;color:#3c4451;font-weight:normal;letter-spacing:0px;">1</div><div class="t" style="left:732.5px;top:748.50px;font-size:13px;color:#3873b9;font-weight:normal;letter-spacing:-0.45px;">Rule #9</div><div class="t" style="left:852.3px;top:748.50px;font-size:13px;color:#3c4451;font-weight:normal;letter-spacing:0px;transform:scaleX(0.888);transform-origin:0 0;">JACKAL</div><div class="t" style="left:943.5px;top:735.50px;font-size:13px;color:#3c4451;font-weight:normal;letter-spacing:-0.27px;">JDBC/3.12.14 (Windows 10 10.0)</div><div class="t" style="left:943.5px;top:761.00px;font-size:13px;color:#3c4451;font-weight:normal;letter-spacing:-0.17px;">JAVA/11.0.5</div><div class="t" style="left:1175px;top:748.50px;font-size:13px;color:#3c4451;font-weight:normal;letter-spacing:0px;">Snowflake2:443</div><div class="t" style="left:1361px;top:735.50px;font-size:13px;color:#3c4451;font-weight:normal;letter-spacing:0px;transform:scaleX(0.89);transform-origin:0 0;">SELECT CURRENT_</div><div class="t" style="left:1361px;top:761.00px;font-size:13px;color:#3873b9;font-weight:normal;letter-spacing:0px;">...more</div><div class="t" style="left:1539.3px;top:748.50px;font-size:13px;color:#3c4451;font-weight:normal;letter-spacing:-0.3px;">198 ms</div><div class="t" style="left:1625.5px;top:735.50px;font-size:13px;color:#3c4451;font-weight:normal;letter-spacing:-0.2px;">11-03</div><div class="t" style="left:1625.5px;top:761.00px;font-size:13px;color:#3c4451;font-weight:normal;letter-spacing:-0.3px;">14:14:24</div><div class="t" style="left:1695.5px;top:735.50px;font-size:13px;color:#3c4451;font-weight:normal;letter-spacing:-0.2px;">11-03</div><div class="t" style="left:1695.5px;top:761.00px;font-size:13px;color:#3c4451;font-weight:normal;letter-spacing:-0.3px;">14:14:24</div><div class="t" style="left:1775.5px;top:748.50px;font-size:13px;color:#3c4451;font-weight:normal;letter-spacing:0px;">1</div><div class="t" style="left:347px;top:801.50px;font-size:13px;color:#3873b9;font-weight:normal;letter-spacing:-0.3px;">241</div><div class="t" style="left:407px;top:801.50px;font-size:13px;color:#3c4451;font-weight:normal;letter-spacing:0px;">Snowflake</div><div class="t" style="left:527px;top:801.50px;font-size:13px;color:#3c4451;font-weight:normal;letter-spacing:-0.3px;">12</div><div class="t" style="left:626.5px;top:801.50px;font-size:13px;color:#3c4451;font-weight:normal;letter-spacing:0px;">1</div><div class="t" style="left:732.5px;top:801.50px;font-size:13px;color:#3873b9;font-weight:normal;letter-spacing:-0.45px;">Rule #9</div><div class="t" style="left:852.3px;top:801.50px;font-size:13px;color:#3c4451;font-weight:normal;letter-spacing:0px;transform:scaleX(0.888);transform-origin:0 0;">JACKAL</div><div class="t" style="left:943.5px;top:801.50px;font-size:13px;color:#3c4451;font-weight:normal;letter-spacing:0px;transform:scaleX(0.89);transform-origin:0 0;">JDBC</div><div class="t" style="left:1175px;top:801.50px;font-size:13px;color:#3c4451;font-weight:normal;letter-spacing:0px;">Snowflake2:443</div><div class="t" style="left:1361px;top:788.50px;font-size:13px;color:#3c4451;font-weight:normal;letter-spacing:0px;transform:scaleX(0.9);transform-origin:0 0;">SELECT * FROM ALI</div><div class="t" style="left:1361px;top:814.00px;font-size:13px;color:#3873b9;font-weight:normal;letter-spacing:0px;">...more</div><div class="t" style="left:1539.3px;top:801.50px;font-size:13px;color:#3c4451;font-weight:normal;letter-spacing:-0.3px;">255 ms</div><div class="t" style="left:1625.5px;top:788.50px;font-size:13px;color:#3c4451;font-weight:normal;letter-spacing:-0.2px;">11-03</div><div class="t" style="left:1625.5px;top:814.00px;font-size:13px;color:#3c4451;font-weight:normal;letter-spacing:-0.3px;">14:14:23</div><div class="t" style="left:1695.5px;top:788.50px;font-size:13px;color:#3c4451;font-weight:normal;letter-spacing:-0.2px;">11-03</div><div class="t" style="left:1695.5px;top:814.00px;font-size:13px;color:#3c4451;font-weight:normal;letter-spacing:-0.3px;">14:14:23</div><div class="t" style="left:1775.5px;top:801.50px;font-size:13px;color:#3c4451;font-weight:normal;letter-spacing:0px;">5</div><div class="t" style="left:347px;top:854.50px;font-size:13px;color:#3873b9;font-weight:normal;letter-spacing:-0.3px;">240</div><div class="t" style="left:407px;top:854.50px;font-size:13px;color:#3c4451;font-weight:normal;letter-spacing:0px;">Snowflake</div><div class="t" style="left:527px;top:854.50px;font-size:13px;color:#3c4451;font-weight:normal;letter-spacing:-0.3px;">11</div><div class="t" style="left:626.5px;top:854.50px;font-size:13px;color:#3c4451;font-weight:normal;letter-spacing:0px;">1</div><div class="t" style="left:732.5px;top:854.50px;font-size:13px;color:#3873b9;font-weight:normal;letter-spacing:-0.45px;">Rule #9</div><div class="t" style="left:852.3px;top:854.50px;font-size:13px;color:#3c4451;font-weight:normal;letter-spacing:0px;transform:scaleX(0.888);transform-origin:0 0;">JACKAL</div><div class="t" style="left:943.5px;top:854.50px;font-size:13px;color:#3c4451;font-weight:normal;letter-spacing:0px;transform:scaleX(0.89);transform-origin:0 0;">JDBC</div><div class="t" style="left:1175px;top:854.50px;font-size:13px;color:#3c4451;font-weight:normal;letter-spacing:0px;">Snowflake2:443</div><div class="t" style="left:1361px;top:841.50px;font-size:13px;color:#3c4451;font-weight:normal;letter-spacing:0px;transform:scaleX(0.89);transform-origin:0 0;">SELECT CURRENT_</div><div class="t" style="left:1361px;top:867.00px;font-size:13px;color:#3873b9;font-weight:normal;letter-spacing:0px;">...more</div><div class="t" style="left:1539.3px;top:854.50px;font-size:13px;color:#3c4451;font-weight:normal;letter-spacing:-0.3px;">199 ms</div><div class="t" style="left:1625.5px;top:841.50px;font-size:13px;color:#3c4451;font-weight:normal;letter-spacing:-0.2px;">11-03</div><div class="t" style="left:1625.5px;top:867.00px;font-size:13px;color:#3c4451;font-weight:normal;letter-spacing:-0.3px;">14:14:21</div><div class="t" style="left:1695.5px;top:841.50px;font-size:13px;color:#3c4451;font-weight:normal;letter-spacing:-0.2px;">11-03</div><div class="t" style="left:1695.5px;top:867.00px;font-size:13px;color:#3c4451;font-weight:normal;letter-spacing:-0.3px;">14:14:21</div><div class="t" style="left:1775.5px;top:854.50px;font-size:13px;color:#3c4451;font-weight:normal;letter-spacing:0px;">1</div><div class="t" style="left:347px;top:907.50px;font-size:13px;color:#3873b9;font-weight:normal;letter-spacing:-0.3px;">239</div><div class="t" style="left:407px;top:907.50px;font-size:13px;color:#3c4451;font-weight:normal;letter-spacing:0px;">Snowflake</div><div class="t" style="left:527px;top:907.50px;font-size:13px;color:#3c4451;font-weight:normal;letter-spacing:-0.3px;">22</div><div class="t" style="left:626.5px;top:907.50px;font-size:13px;color:#3c4451;font-weight:normal;letter-spacing:0px;">1</div><div class="t" style="left:732.5px;top:907.50px;font-size:13px;color:#3873b9;font-weight:normal;letter-spacing:-0.45px;">Rule #9</div><div class="t" style="left:852.3px;top:907.50px;font-size:13px;color:#3c4451;font-weight:normal;letter-spacing:0px;transform:scaleX(0.888);transform-origin:0 0;">JACKAL</div><div class="t" style="left:943.5px;top:894.50px;font-size:13px;color:#3c4451;font-weight:normal;letter-spacing:-0.27px;">JDBC/3.12.14 (Windows 10 10.0)</div><div class="t" style="left:943.5px;top:920.00px;font-size:13px;color:#3c4451;font-weight:normal;letter-spacing:-0.17px;">JAVA/11.0.5</div><div class="t" style="left:1175px;top:907.50px;font-size:13px;color:#3c4451;font-weight:normal;letter-spacing:0px;">Snowflake2:443</div><div class="t" style="left:1361px;top:894.50px;font-size:13px;color:#3c4451;font-weight:normal;letter-spacing:0px;transform:scaleX(0.9);transform-origin:0 0;">SELECT * FROM ALI</div><div class="t" style="left:1361px;top:920.00px;font-size:13px;color:#3873b9;font-weight:normal;letter-spacing:0px;">...more</div><div class="t" style="left:1539.3px;top:907.50px;font-size:13px;color:#3c4451;font-weight:normal;letter-spacing:-0.3px;">240 ms</div><div class="t" style="left:1625.5px;top:894.50px;font-size:13px;color:#3c4451;font-weight:normal;letter-spacing:-0.2px;">11-03</div><div class="t" style="left:1625.5px;top:920.00px;font-size:13px;color:#3c4451;font-weight:normal;letter-spacing:-0.3px;">14:14:21</div><div class="t" style="left:1695.5px;top:894.50px;font-size:13px;color:#3c4451;font-weight:normal;letter-spacing:-0.2px;">11-03</div><div class="t" style="left:1695.5px;top:920.00px;font-size:13px;color:#3c4451;font-weight:normal;letter-spacing:-0.3px;">14:14:21</div><div class="t" style="left:1775.5px;top:907.50px;font-size:13px;color:#3c4451;font-weight:normal;letter-spacing:0px;">5</div>
</body></html>
